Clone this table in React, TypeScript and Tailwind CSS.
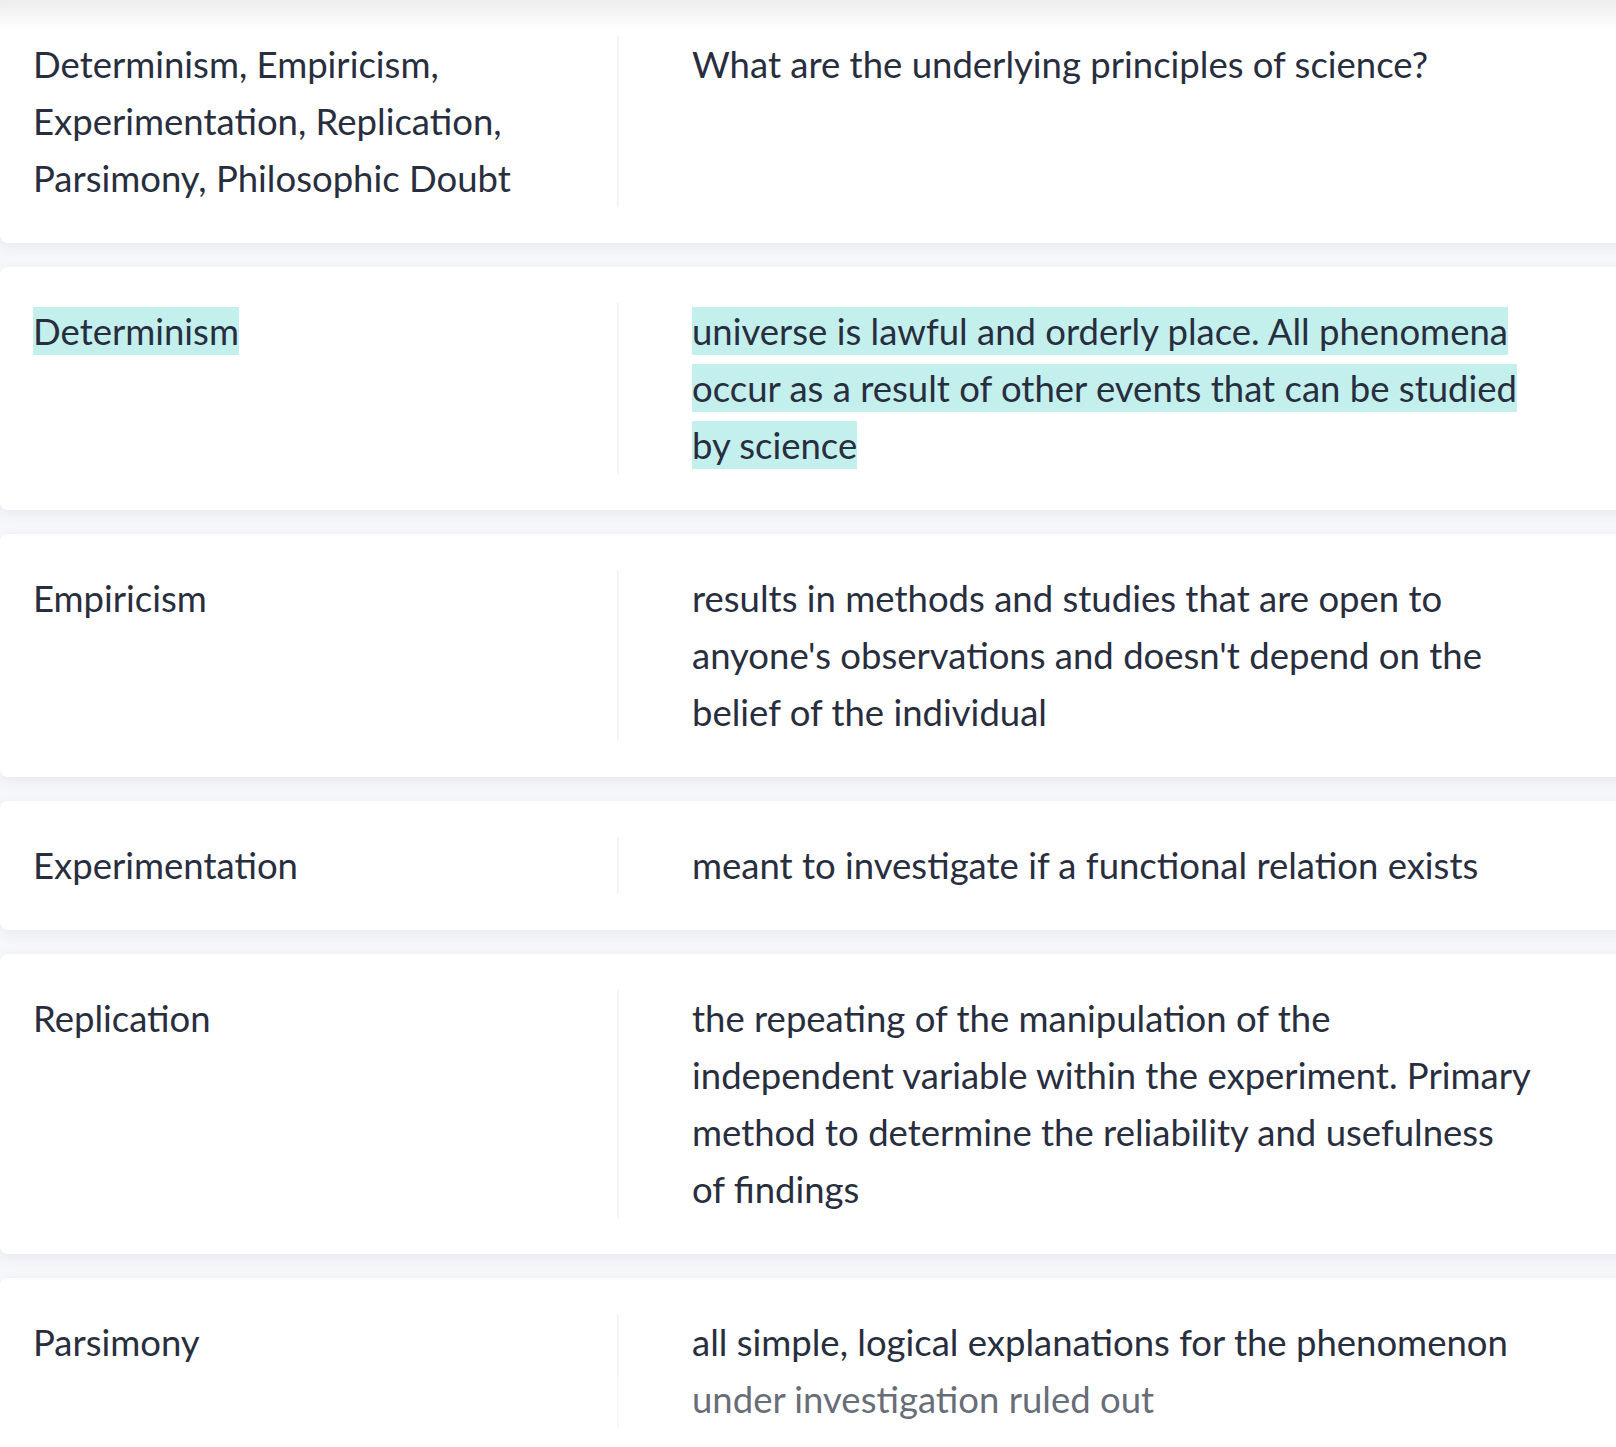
import React from "react";

type Card = {
  term: string;
  definition: string;
  highlighted?: boolean;
};

const cards: Card[] = [
  {
    term: "Determinism, Empiricism, Experimentation, Replication, Parsimony, Philosophic Doubt",
    definition: "What are the underlying principles of science?",
  },
  {
    term: "Determinism",
    definition:
      "universe is lawful and orderly place. All phenomena occur as a result of other events that can be studied by science",
    highlighted: true,
  },
  {
    term: "Empiricism",
    definition:
      "results in methods and studies that are open to anyone's observations and doesn't depend on the belief of the individual",
  },
  {
    term: "Experimentation",
    definition: "meant to investigate if a functional relation exists",
  },
  {
    term: "Replication",
    definition:
      "the repeating of the manipulation of the independent variable within the experiment. Primary method to determine the reliability and usefulness of findings",
  },
  {
    term: "Parsimony",
    definition: "all simple, logical explanations for the phenomenon under investigation ruled out",
  },
];

const Mark: React.FC<{ on?: boolean; children: React.ReactNode }> = ({ on, children }) =>
  on ? (
    <span className="bg-[#c3efed] py-[2px] [box-decoration-break:clone]">{children}</span>
  ) : (
    <>{children}</>
  );

const TermRow: React.FC<{ card: Card }> = ({ card }) => (
  <div className="flex w-[1660px] rounded-lg bg-white py-[36px] shadow-[0_4px_14px_rgba(46,56,86,0.07)]">
    {/* Term side */}
    <div className="w-[619px] shrink-0 border-r-2 border-[#f3f4f7] pl-[33px] pr-[80px]">
      <Mark on={card.highlighted}>{card.term}</Mark>
    </div>
    {/* Definition side */}
    <div className="w-[914px] shrink-0 pl-[73px]">
      <Mark on={card.highlighted}>{card.definition}</Mark>
    </div>
  </div>
);

const App: React.FC = () => {
  return (
    <div className="relative h-[1447px] overflow-hidden bg-[#f6f7fb] font-['Lato',sans-serif] text-[36.5px] leading-[57px] text-[#282e3e]">
      <div className="flex flex-col gap-[24px]">
        {cards.map((card) => (
          <TermRow key={card.term} card={card} />
        ))}
      </div>

      {/* header shadow and bottom fade */}
      <div className="pointer-events-none absolute inset-x-0 top-0 h-[30px] bg-gradient-to-b from-[#ededee] to-transparent" />
      <div className="pointer-events-none absolute inset-x-0 bottom-0 h-[72px] bg-white/30" />
    </div>
  );
};

export default App;
